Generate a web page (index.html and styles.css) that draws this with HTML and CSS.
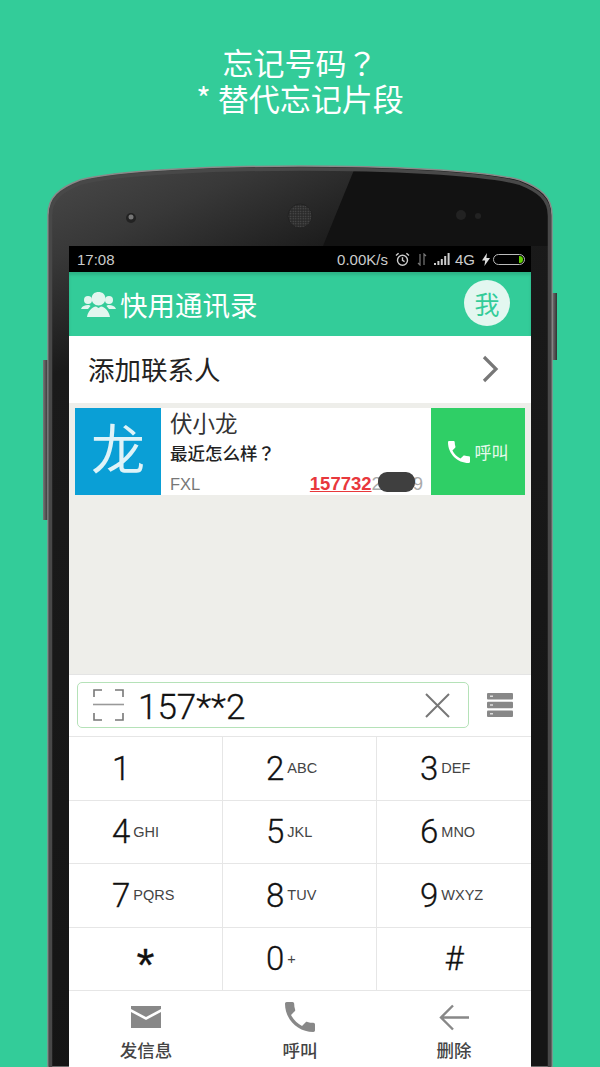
FILE: index.html
```html
<!DOCTYPE html>
<html lang="zh-CN">
<head>
    <meta charset="UTF-8">
    <meta name="viewport" content="width=device-width, initial-scale=1.0">
    <title>快用通讯录</title>
    <link rel="stylesheet" href="styles.css">
</head>
<body>
    <header class="caption">
        <p>忘记号码<span class="mark" lang="zh-TW">？</span></p>
        <p>* 替代忘记片段</p>
    </header>

    <div class="phone">
        <!-- handset body, sits behind the screen -->
        <svg class="handset" width="506" height="902" viewBox="0 0 506 902">
            <defs>
                <linearGradient id="bezel" x1="0" y1="0" x2="0.25" y2="1">
                    <stop offset="0" stop-color="#4a4a4a"/>
                    <stop offset="0.1" stop-color="#383838"/>
                    <stop offset="0.22" stop-color="#1a1a1a"/>
                    <stop offset="1" stop-color="#151515"/>
                </linearGradient>
                <linearGradient id="side-btn" x1="0" y1="0" x2="1" y2="0">
                    <stop offset="0" stop-color="#777"/>
                    <stop offset="1" stop-color="#333"/>
                </linearGradient>
                <pattern id="mesh" width="2.500" height="2.500" patternUnits="userSpaceOnUse">
                    <rect width="2.500" height="2.500" fill="#2a2a2a"/>
                    <circle cx="1.250" cy="1.250" r="0.700" fill="#555"/>
                </pattern>
            </defs>
            <rect x="505" y="128" width="5" height="67" fill="url(#side-btn)"/>
            <rect x="-4" y="195" width="5" height="160" fill="url(#side-btn)"/>
            <path d="M1 902V50C1 32 12 23 33 15C70 5 170 1 253 1S436 5 473 15C494 23 505 32 505 50V902Z" fill="url(#bezel)" stroke="#8a8a8a" stroke-width="1.500"/>
            <path d="M307 5C380 7 440 10 470 17C492 24 502 34 502 52V81H276Z" fill="#121212"/>
            <path d="M3.500 902V51C3.500 34 14 26 34 18C71 8 170 4 253 4S435 8 472 18C492 26 502.500 34 502.500 51V902" fill="none" stroke="#484848" stroke-width="3.500"/>
            <circle cx="84" cy="53" r="5" fill="#222"/>
            <circle cx="84" cy="52" r="2.500" fill="#777"/>
            <circle cx="253" cy="51" r="12" fill="url(#mesh)" stroke="#222"/>
            <circle cx="414" cy="50" r="5" fill="#222"/>
            <circle cx="431" cy="51" r="3" fill="#222"/>
        </svg>

        <main class="screen">
            <div class="status-bar">
                <span class="status-time">17:08</span>
                <div class="status-right">
                    <span class="status-speed">0.00K/s</span>
                    <svg width="15" height="15" viewBox="0 0 15 15" fill="none" stroke="#ccc" stroke-width="1.400">
                        <circle cx="7.500" cy="8.200" r="5"/>
                        <path d="M7.500 5.200V8.400L9.600 9.600M1 3.600L3.600 1.200M14 3.600L11.400 1.200"/>
                    </svg>
                    <svg class="status-arrows" width="10" height="13" viewBox="0 0 10 13" fill="none" stroke="#777" stroke-width="1.200">
                        <path d="M3 1V12L1 10M7 12V1L9 3"/>
                    </svg>
                    <svg class="status-signal" width="16" height="12" viewBox="0 0 16 12" fill="#ccc">
                        <path d="M0 10h2v2H0zM3.400 8h2v4h-2zM6.800 6h2v6h-2zM10.200 3h2v9h-2zM13.600 0h2v12h-2z"/>
                    </svg>
                    <span class="status-net">4G</span>
                    <svg class="status-bolt" width="8" height="13" viewBox="0 0 8 13" fill="#ddd">
                        <path d="M5 0L0 7.500H3.200L2.400 13L8 5H4.400Z"/>
                    </svg>
                    <div class="battery"><span class="battery-level"></span></div>
                </div>
            </div>

            <div class="app-bar">
                <svg class="app-logo" width="35" height="27" viewBox="0 0 35 27" fill="#e2f6ef">
                    <circle cx="7" cy="9" r="4"/>
                    <circle cx="28" cy="9" r="4"/>
                    <path d="M0 18C1 15 4 14 7 14C8 14 9 14.400 9.500 15L7 18ZM35 18C34 15 31 14 28 14C27 14 26 14.400 25.500 15L28 18Z"/>
                    <path d="M10.600 7.500C10.800 3 13.800 1 17.500 1S24.200 3 24.400 7.500C24.400 11.500 21.400 14.500 17.500 14.500S10.600 11.500 10.600 7.500Z"/>
                    <path d="M6 26C7 20 11 16 15 15.500L17.500 17L20 15.500C24 16 28 20 29 26Z"/>
                </svg>
                <h1 class="app-title">快用通讯录</h1>
                <div class="me-btn">我</div>
            </div>

            <div class="add-row">
                <span>添加联系人</span>
                <svg width="17" height="28" viewBox="0 0 17 28" fill="none" stroke="#777" stroke-width="3.200">
                    <path d="M2 2L14 14L2 26"/>
                </svg>
            </div>

            <section class="results">
                <article class="contact-card">
                    <div class="avatar">龙</div>
                    <div class="contact-info">
                        <div class="contact-name">伏小龙</div>
                        <div class="contact-note">最近怎么样<span class="mark" lang="zh-TW">？</span></div>
                        <div class="contact-foot">
                            <span class="contact-pinyin">FXL</span>
                            <span class="contact-number"><em>157732</em>22229<i class="number-mask"></i></span>
                        </div>
                    </div>
                    <div class="call-btn">
                        <svg width="22" height="22" viewBox="3 3 18 18" fill="#fff">
                            <path d="M6.620 10.790c1.440 2.830 3.760 5.140 6.590 6.590l2.200-2.200c.27-.27.67-.36 1.020-.24 1.120.37 2.330.57 3.570.57.55 0 1 .45 1 1V20c0 .55-.45 1-1 1-9.390 0-17-7.610-17-17 0-.55.45-1 1-1h3.500c.55 0 1 .45 1 1 0 1.250.2 2.450.57 3.570.11.35.03.74-.25 1.020l-2.200 2.200z"/>
                        </svg>
                        <span>呼叫</span>
                    </div>
                </article>
            </section>

            <div class="search-panel">
                <div class="search-box">
                    <svg width="31" height="32" viewBox="0 0 31 32" fill="none" stroke="#777" stroke-width="1.600">
                        <path d="M1 8V1H9M22 1H30V8M1 24V31H9M22 31H30V24"/>
                        <path d="M0 15.500H31" stroke="#999"/>
                    </svg>
                    <span class="search-text">157**2</span>
                    <svg width="25" height="25" viewBox="0 0 25 25" fill="none" stroke="#777" stroke-width="2">
                        <path d="M1 1L24 24M24 1L1 24"/>
                    </svg>
                </div>
                <svg class="list-icon" width="26" height="24" viewBox="0 0 26 24" fill="#888">
                    <rect width="26" height="6.500" rx="1"/>
                    <rect y="8.700" width="26" height="6.500" rx="1"/>
                    <rect y="17.400" width="26" height="6.500" rx="1"/>
                    <path d="M3 2.500h3v1.500H3zM3 11.200h3v1.500H3zM3 19.900h3v1.500H3z" fill="#ddd"/>
                </svg>
            </div>

            <div class="keypad">
                <div class="key"><b>1</b></div>
                <div class="key"><b>2</b><span>ABC</span></div>
                <div class="key"><b>3</b><span>DEF</span></div>
                <div class="key"><b>4</b><span>GHI</span></div>
                <div class="key"><b>5</b><span>JKL</span></div>
                <div class="key"><b>6</b><span>MNO</span></div>
                <div class="key"><b>7</b><span>PQRS</span></div>
                <div class="key"><b>8</b><span>TUV</span></div>
                <div class="key"><b>9</b><span>WXYZ</span></div>
                <div class="key key-symbol"><b class="star">*</b></div>
                <div class="key"><b>0</b><span>+</span></div>
                <div class="key key-symbol"><b>#</b></div>
            </div>

            <nav class="actions">
                <div class="action">
                    <div class="action-icon">
                        <svg width="30" height="22" viewBox="0 0 30 22" fill="#888">
                            <path d="M0 0H30V3L15 11L0 3ZM0 6L15 14L30 6V22H0Z"/>
                        </svg>
                    </div>
                    <span>发信息</span>
                </div>
                <div class="action">
                    <div class="action-icon">
                        <svg width="30" height="30" viewBox="3 3 18 18" fill="#888">
                            <path d="M6.620 10.790c1.440 2.830 3.760 5.140 6.590 6.590l2.200-2.200c.27-.27.67-.36 1.020-.24 1.120.37 2.330.57 3.570.57.55 0 1 .45 1 1V20c0 .55-.45 1-1 1-9.390 0-17-7.610-17-17 0-.55.45-1 1-1h3.500c.55 0 1 .45 1 1 0 1.250.2 2.450.57 3.570.11.35.03.74-.25 1.020l-2.200 2.200z"/>
                        </svg>
                    </div>
                    <span>呼叫</span>
                </div>
                <div class="action">
                    <div class="action-icon">
                        <svg width="30" height="27" viewBox="0 0 30 27" fill="none" stroke="#888" stroke-width="2.400">
                            <path d="M30 13.500H2M14 1.500L2 13.500L14 25.500"/>
                        </svg>
                    </div>
                    <span>删除</span>
                </div>
            </nav>
        </main>
    </div>
</body>
</html>
```

FILE: styles.css
```css
* {
    margin: 0;
    padding: 0;
    box-sizing: border-box;
}

body {
    width: 600px;
    height: 1067px;
    overflow: hidden;
    background-color: #33cc99;
    font-family: "Noto Sans CJK SC", "Liberation Sans", sans-serif;
    color: #222;
}

.caption {
    height: 165px;
    padding-top: 44px;
    text-align: center;
    color: #fff;
    font-size: 31px;
    line-height: 36px;
}

.mark {
    font-family: "Noto Sans CJK TC", sans-serif;
}

.phone {
    position: relative;
    width: 506px;
    height: 902px;
    margin: 0 auto;
    padding: 81px 22px 0;
}

.handset {
    position: absolute;
    top: 0;
    left: 0;
    overflow: visible;
}

.screen {
    position: relative;
    display: flex;
    flex-direction: column;
    height: 821px;
    background: #fff;
}

/* status bar */
.status-bar {
    display: flex;
    justify-content: space-between;
    align-items: center;
    height: 26px;
    padding: 0 6px 0 8px;
    background: #000;
    color: #ccc;
    font-family: "Liberation Sans", sans-serif;
    font-size: 15px;
}

.status-right {
    display: flex;
    align-items: center;
}

.status-speed {
    margin-right: 7px;
}

.status-arrows,
.status-signal,
.status-bolt {
    margin-left: 7px;
}

.status-net {
    margin-left: 5px;
}

.battery {
    display: flex;
    justify-content: flex-end;
    width: 32px;
    height: 11px;
    margin-left: 3px;
    padding: 1px;
    border: 1px solid #bbb;
    border-radius: 6px;
}

.battery-level {
    width: 4px;
    background: #5fd000;
    border-radius: 0 4px 4px 0;
}

/* app bar */
.app-bar {
    display: flex;
    align-items: center;
    height: 64px;
    padding: 0 21px 0 12px;
    background: #33cc99;
    box-shadow: inset 0 3px 3px rgba(0, 0, 0, 0.12);
}

.app-title {
    flex: 1;
    margin-left: 4px;
    color: #fff;
    font-size: 27.500px;
    font-weight: 400;
}

.me-btn {
    width: 46px;
    height: 46px;
    margin-top: -3px;
    border-radius: 50%;
    background: #e3f7f0;
    color: #33cc99;
    font-size: 25px;
    line-height: 46px;
    text-align: center;
}

/* add contact */
.add-row {
    display: flex;
    justify-content: space-between;
    align-items: center;
    height: 67px;
    padding: 0 32px 2px 19px;
    font-size: 26.500px;
}

/* results */
.results {
    height: 271px;
    padding: 5px 6px;
    background: #eeeeea;
}

.contact-card {
    display: flex;
    height: 87px;
    background: #fff;
}

.avatar {
    width: 86px;
    background: #0a9fd6;
    color: #dff3f8;
    font-size: 54px;
    line-height: 78px;
    text-align: center;
}

.contact-info {
    flex: 1;
    padding: 0 8px 0 9px;
}

.contact-name {
    height: 31px;
    font-size: 22.500px;
    line-height: 29px;
    color: #333;
}

.contact-note {
    height: 28px;
    font-size: 17.500px;
    font-weight: 500;
    line-height: 28px;
}

.contact-foot {
    display: flex;
    justify-content: space-between;
    align-items: center;
    height: 28px;
    padding-top: 6px;
    font-family: "Liberation Sans", sans-serif;
    color: #777;
}

.contact-pinyin {
    font-size: 16.500px;
}

.contact-number {
    position: relative;
    font-size: 18.500px;
    color: #aaa;
}

.contact-number em {
    font-style: normal;
    font-weight: 700;
    color: #e8383c;
    text-decoration: underline;
}

.number-mask {
    position: absolute;
    top: -1px;
    right: 8px;
    width: 37px;
    height: 20px;
    border-radius: 9px;
    background: #3f3f3f;
}

.call-btn {
    display: flex;
    justify-content: center;
    align-items: center;
    gap: 5px;
    width: 94px;
    background: #2fcf66;
    color: #e6f9ec;
    font-size: 17px;
}

/* number entry */
.search-panel {
    display: flex;
    align-items: center;
    justify-content: space-between;
    height: 63px;
    padding: 0 18px 1px 8px;
    border-top: 1px solid #e4e4e4;
    border-bottom: 1px solid #e6e6e6;
}

.search-box {
    display: flex;
    align-items: center;
    width: 392px;
    height: 46px;
    padding: 0 18px 0 15px;
    border: 1.500px solid #b5e2b8;
    border-radius: 5px;
}

.search-text {
    flex: 1;
    margin-left: 14px;
    padding-top: 5px;
    font-family: Roboto, sans-serif;
    font-weight: 300;
    font-size: 35px;
    line-height: 40px;
    color: #111;
    -webkit-text-stroke: 0.3px #111;
}

/* keypad */
.keypad {
    display: grid;
    grid-template-columns: 154px 154px 154px;
    grid-auto-rows: 63.500px;
}

.key {
    display: flex;
    align-items: center;
    gap: 3px;
    padding-left: 43px;
    border-right: 1px solid #e6e6e6;
    border-bottom: 1px solid #e6e6e6;
}

.key:nth-child(3n) {
    border-right: none;
}

.key b {
    font-family: Roboto, sans-serif;
    font-size: 33px;
    font-weight: 300;
    color: #111;
    -webkit-text-stroke: 0.3px #111;
}

.key span {
    font-family: "Liberation Sans", sans-serif;
    font-size: 14.500px;
    color: #444;
}

.key-symbol {
    justify-content: center;
    padding-left: 0;
}

.key b.star {
    margin-top: 13px;
    font-family: "Liberation Sans", sans-serif;
    font-size: 46px;
    line-height: 46px;
}

/* bottom actions */
.actions {
    display: grid;
    grid-template-columns: 154px 154px 154px;
    flex: 1;
}

.action {
    display: flex;
    flex-direction: column;
    align-items: center;
    padding-top: 6px;
    color: #444;
    font-size: 17.500px;
    font-weight: 500;
    line-height: 26px;
}

.action-icon {
    display: flex;
    align-items: center;
    height: 40px;
}
```
